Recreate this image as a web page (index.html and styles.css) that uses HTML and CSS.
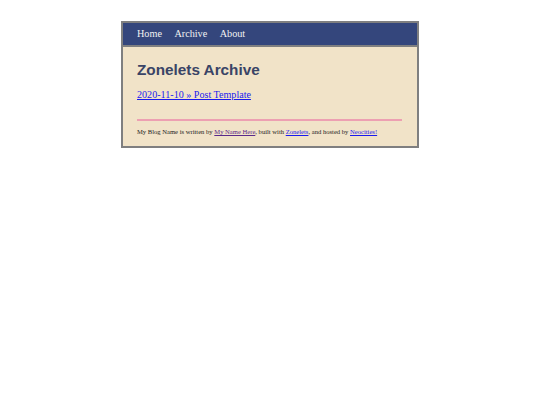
FILE: index.html
```html
<!DOCTYPE html>
<html>
<head>
<meta charset="utf-8">
<link rel="stylesheet" href="styles.css">
</head>
<body>
<div class="container">
  <nav class="nav">
    <a href="#">Home</a>
    <a href="#">Archive</a>
    <a href="#">About</a>
  </nav>
  <main class="content">
    <h1 class="title">Zonelets Archive</h1>
    <ul class="posts">
      <li><a href="#">2020-11-10 » Post Template</a></li>
    </ul>
    <hr class="rule">
    <footer class="footer">
      My Blog Name is written by <a href="#" class="visited">My Name Here</a>, built with <a href="#">Zonelets</a>, and hosted by <a href="#">Neocities!</a>
    </footer>
  </main>
</div>
</body>
</html>
```

FILE: styles.css
```css
html, body {
  margin: 0;
  padding: 0;
  background: #ffffff;
}
body {
  font-family: "Liberation Serif", "Times New Roman", serif;
  padding-top: 21px;
}
.container {
  width: 294px;
  margin: 0 auto 0 121px;
  border: 2px solid #7f7f80;
  background: #f1e3c8;
}
.nav {
  display: flex;
  gap: 12.5px;
  background: #34467c;
  height: 21px;
  align-items: center;
  padding: 0 0 1px 14px;
  box-sizing: content-box;
  border-bottom: 2px solid #7f7f80;
}
.nav a {
  color: #f2f2f2;
  text-decoration: none;
  font-size: 10.2px;
}
.content {
  padding: 13px 15px 10px 14px;
}
.title {
  margin: 0;
  font-family: "Liberation Sans", Arial, sans-serif;
  font-weight: bold;
  font-size: 15.3px;
  color: #3a4466;
  line-height: 20px;
}
.posts {
  list-style: none;
  margin: 8px 0 0 0;
  padding: 0;
  font-size: 10.1px;
  line-height: 14px;
}
.posts a {
  color: #1a1aee;
}
.rule {
  margin: 17px 0 0 0;
  border: none;
  height: 2px;
  background: #eda0b2;
}
.footer {
  margin-top: 6px;
  font-size: 6.6px;
  color: #222;
  line-height: 9px;
}
.footer a {
  color: #1a1aee;
}
.footer a.visited {
  color: #5a2a8a;
}
```
